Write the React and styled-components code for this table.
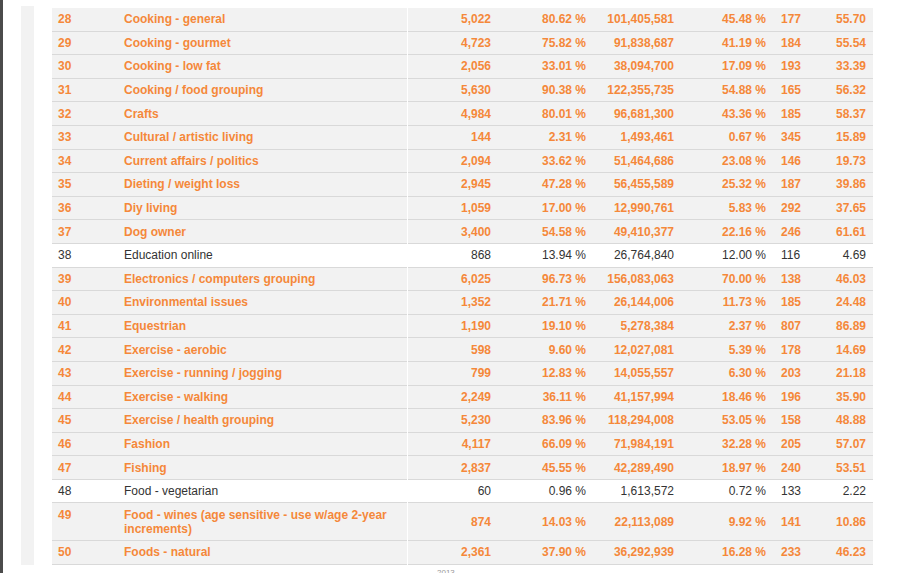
import React from 'react';
import styled, { createGlobalStyle } from 'styled-components';

const GlobalStyle = createGlobalStyle`
  html, body {
    margin: 0;
    padding: 0;
    background: #fff;
  }
  body {
    font-family: "Liberation Sans", Arial, sans-serif;
  }
`;

const Page = styled.div`
  display: flex;
  height: 573px;
  overflow: hidden;
`;

const DarkEdge = styled.div`
  width: 3px;
  flex-shrink: 0;
  background: #4b4b4b;
`;

const SideStrip = styled.div`
  width: 13px;
  height: 559px;
  margin: 6px 0 0 18px;
  flex-shrink: 0;
  background: #f2f2f2;
`;

const Main = styled.div`
  width: 821px;
  margin-left: 18px;
  padding-top: 8px;
  flex-shrink: 0;
`;

const Table = styled.table`
  width: 821px;
  table-layout: fixed;
  border-collapse: collapse;
  font-size: 12px;
  line-height: 14px;
`;

const Col = styled.col`
  width: ${(p) => p.$w}px;
`;

const Row = styled.tr`
  background: ${(p) => (p.$highlight ? '#f2f2f2' : '#fff')};
  color: ${(p) => (p.$highlight ? '#f5883a' : '#333')};
  font-weight: ${(p) => (p.$highlight ? 700 : 400)};
  border-bottom: 1px solid #d9d9d9;
`;

const Cell = styled.td`
  padding: 4.3px ${(p) => p.$pr || 6}px 4.3px ${(p) => p.$pl || 6}px;
  text-align: ${(p) => (p.$right ? 'right' : 'left')};
  vertical-align: ${(p) => (p.$top ? 'top' : 'middle')};
  white-space: ${(p) => (p.$wrap ? 'normal' : 'nowrap')};
  border-right: ${(p) => (p.$split ? '1px solid #fff' : 'none')};
`;

const Footer = styled.div`
  margin: 3px 0 0 385px;
  font-size: 8px;
  color: #999;
`;

const colWidths = [66, 289, 90, 95, 88, 92, 46, 55];

const rows = [
  [28, 'Cooking - general', '5,022', '80.62 %', '101,405,581', '45.48 %', '177', '55.70', true],
  [29, 'Cooking - gourmet', '4,723', '75.82 %', '91,838,687', '41.19 %', '184', '55.54', true],
  [30, 'Cooking - low fat', '2,056', '33.01 %', '38,094,700', '17.09 %', '193', '33.39', true],
  [31, 'Cooking / food grouping', '5,630', '90.38 %', '122,355,735', '54.88 %', '165', '56.32', true],
  [32, 'Crafts', '4,984', '80.01 %', '96,681,300', '43.36 %', '185', '58.37', true],
  [33, 'Cultural / artistic living', '144', '2.31 %', '1,493,461', '0.67 %', '345', '15.89', true],
  [34, 'Current affairs / politics', '2,094', '33.62 %', '51,464,686', '23.08 %', '146', '19.73', true],
  [35, 'Dieting / weight loss', '2,945', '47.28 %', '56,455,589', '25.32 %', '187', '39.86', true],
  [36, 'Diy living', '1,059', '17.00 %', '12,990,761', '5.83 %', '292', '37.65', true],
  [37, 'Dog owner', '3,400', '54.58 %', '49,410,377', '22.16 %', '246', '61.61', true],
  [38, 'Education online', '868', '13.94 %', '26,764,840', '12.00 %', '116', '4.69', false],
  [39, 'Electronics / computers grouping', '6,025', '96.73 %', '156,083,063', '70.00 %', '138', '46.03', true],
  [40, 'Environmental issues', '1,352', '21.71 %', '26,144,006', '11.73 %', '185', '24.48', true],
  [41, 'Equestrian', '1,190', '19.10 %', '5,278,384', '2.37 %', '807', '86.89', true],
  [42, 'Exercise - aerobic', '598', '9.60 %', '12,027,081', '5.39 %', '178', '14.69', true],
  [43, 'Exercise - running / jogging', '799', '12.83 %', '14,055,557', '6.30 %', '203', '21.18', true],
  [44, 'Exercise - walking', '2,249', '36.11 %', '41,157,994', '18.46 %', '196', '35.90', true],
  [45, 'Exercise / health grouping', '5,230', '83.96 %', '118,294,008', '53.05 %', '158', '48.88', true],
  [46, 'Fashion', '4,117', '66.09 %', '71,984,191', '32.28 %', '205', '57.07', true],
  [47, 'Fishing', '2,837', '45.55 %', '42,289,490', '18.97 %', '240', '53.51', true],
  [48, 'Food - vegetarian', '60', '0.96 %', '1,613,572', '0.72 %', '133', '2.22', false],
  [49, 'Food - wines (age sensitive - use w/age 2-year increments)', '874', '14.03 %', '22,113,089', '9.92 %', '141', '10.86', true],
  [50, 'Foods - natural', '2,361', '37.90 %', '36,292,939', '16.28 %', '233', '46.23', true],
];

export default function App() {
  return (
    <>
      <GlobalStyle />
      <Page>
        <DarkEdge />
        <SideStrip />
        <Main>
          <Table>
            <colgroup>
              {colWidths.map((w, i) => (
                <Col key={i} $w={w} />
              ))}
            </colgroup>
            <tbody>
              {rows.map(([num, name, count, pct, total, share, index, score, hl]) => (
                <Row key={num} $highlight={hl}>
                  <Cell $top>{num}</Cell>
                  <Cell $top $wrap $split>{name}</Cell>
                  <Cell $right>{count}</Cell>
                  <Cell $right>{pct}</Cell>
                  <Cell $right>{total}</Cell>
                  <Cell $right>{share}</Cell>
                  <Cell $pl={9}>{index}</Cell>
                  <Cell $right $pr={7}>{score}</Cell>
                </Row>
              ))}
            </tbody>
          </Table>
          <Footer>2013</Footer>
        </Main>
      </Page>
    </>
  );
}
